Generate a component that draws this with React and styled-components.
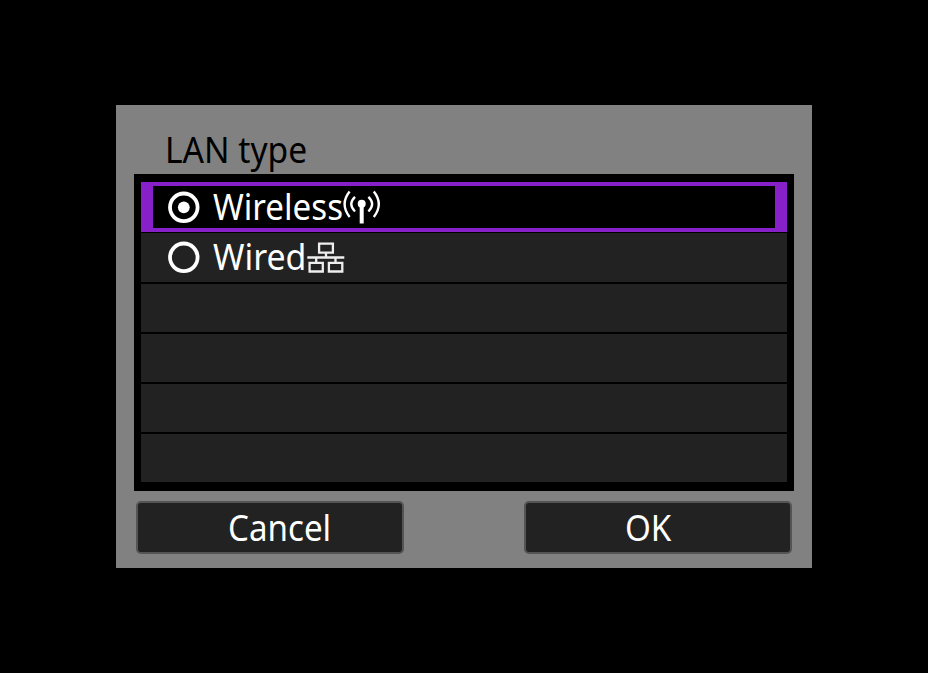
import React from "react";
import styled, { createGlobalStyle } from "styled-components";

const GlobalStyle = createGlobalStyle`
  * { box-sizing: border-box; }
  body { margin: 0; background: #000; overflow: hidden; }
`;

const Screen = styled.main`
  width: 928px;
  height: 673px;
  padding: 105px 0 0 116px;
  background: #000;
  color: #fff;
  font: 36px/50px "Noto Sans", sans-serif;
`;

const Dialog = styled.section`
  width: 696px;
  height: 463px;
  padding: 20px 18px 0;
  background: #818181;
`;

const Title = styled.h1`
  margin: 0;
  height: 49px;
  padding-left: 31px;
  color: #000;
  font: inherit;
`;

const Text = styled.span`
  display: block;
  flex: none;
  width: ${(p) => p.$width}px;
  white-space: nowrap;
  transform: scaleX(${(p) => p.$scale});
  transform-origin: left;
`;

const List = styled.div`
  height: 317px;
  padding: 8px 7px;
  background: #000;
`;

const Row = styled.div`
  display: flex;
  align-items: center;
  height: 48px;
  margin-bottom: 2px;
  padding-left: 26px;
  background: #222;
`;

const SelectedRow = styled(Row)`
  height: 50px;
  margin-bottom: 1px;
  padding-left: 14px;
  background: #000;
  border: solid #8720c8;
  border-width: 4px 12px;
`;

const WiredRow = styled(Row)`
  height: 49px;
  padding-bottom: 1px;
`;

const RadioIcon = styled.svg`
  flex: none;
  width: 34px;
  height: 34px;
  margin-right: 12px;
`;

const LanIcon = styled.svg`
  flex: none;
  width: 40px;
  height: 36px;
`;

const Actions = styled.footer`
  display: flex;
  justify-content: space-between;
  padding: 10px 2px 0;
`;

const Button = styled.button`
  display: flex;
  width: 268px;
  height: 53px;
  padding: 0 0 0 ${(p) => p.$inset}px;
  border: 2px solid #545454;
  border-radius: 5px;
  background: #222;
  color: #fff;
  font: inherit;
`;

const Radio = ({ checked }) => (
  <RadioIcon viewBox="0 0 34 34">
    <circle cx="16.8" cy="17.3" r="13.8" fill="none" stroke="#fff" strokeWidth="3.8" />
    {checked && <circle cx="16.8" cy="17.3" r="5.9" fill="#fff" />}
  </RadioIcon>
);

const WirelessIcon = () => (
  <LanIcon viewBox="342 189 40 36" fill="none" stroke="#fff" strokeWidth="2.4">
    <path d="M349.6 191.5Q339.6 204 349.6 217M373.8 191.5Q383.8 204 373.8 217M355 196.8Q347.5 204 355 211.5M368.4 196.8Q375.9 204 368.4 211.5" />
    <path d="M361.7 204V223.5" strokeWidth="4" />
    <circle cx="361.7" cy="203.8" r="4" fill="#fff" stroke="none" />
  </LanIcon>
);

const WiredIcon = () => (
  <LanIcon viewBox="306 239 40 36" fill="none" stroke="#eee" strokeWidth="2.3">
    <path d="M319.1 243.6H332.9V252.6H319.1ZM309.6 262.9H322.8V271.5H309.6ZM328.9 262.9H342.3V271.5H328.9ZM307.3 257.5H344.3M326 252.6V257.5M316.2 257.5V262.7M335.5 257.5V262.7" />
  </LanIcon>
);

export default function App() {
  return (
    <>
      <GlobalStyle />
      <Screen>
        <Dialog>
          <Title><Text $width={141} $scale={0.933}>LAN type</Text></Title>
          <List role="radiogroup">
            <SelectedRow>
              <Radio checked />
              <Text $width={129} $scale={0.92}>Wireless</Text>
              <WirelessIcon />
            </SelectedRow>
            <WiredRow>
              <Radio />
              <Text $width={93} $scale={0.94}>Wired</Text>
              <WiredIcon />
            </WiredRow>
            <Row />
            <Row />
            <Row />
            <Row />
          </List>
          <Actions>
            <Button $inset={90}><Text $width={102} $scale={0.92}>Cancel</Text></Button>
            <Button $inset={99}><Text $width={48} $scale={0.92}>OK</Text></Button>
          </Actions>
        </Dialog>
      </Screen>
    </>
  );
}
